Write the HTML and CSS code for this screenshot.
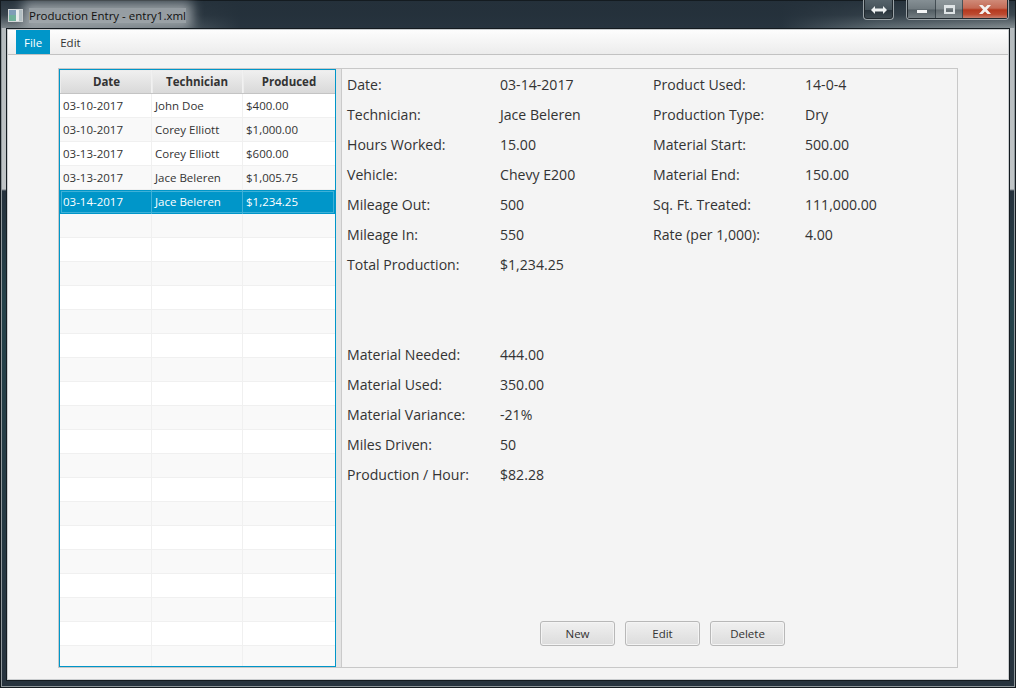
FILE: index.html
```html
<!DOCTYPE html>
<html lang="en">
<head>
<meta charset="utf-8">
<title>Production Entry - entry1.xml</title>
<link rel="stylesheet" href="styles.css">
</head>
<body>
<div class="window">
  <header class="titlebar">
    <svg class="app-icon" width="15" height="13" viewBox="0 0 15 13">
      <rect width="15" height="13" fill="#d5d9da"/>
      <rect x="1" y="1" width="7" height="11" fill="#6fb09a"/>
      <rect x="1" y="1" width="7" height="5" fill="#7f9cb8"/>
      <rect x="8" y="1" width="3" height="11" fill="#f2f4f4"/>
      <rect x="11" y="1" width="3" height="11" fill="#b3c2c7"/>
    </svg>
    <span class="title">Production Entry - entry1.xml</span>
    <div class="caption-group resize">
      <svg width="16" height="8" viewBox="0 0 16 8"><path d="M0 4 4 0v2.500h8V0l4 4-4 4V5.500H4V8Z" fill="#eef1f2"/></svg>
    </div>
    <div class="caption-group controls">
      <div class="cap min"><svg width="10" height="3" viewBox="0 0 10 3"><rect width="10" height="3" fill="#f4f6f7"/></svg></div>
      <div class="cap max"><svg width="11" height="9" viewBox="0 0 11 9"><path d="M0 0h11v9H0ZM2 3v4h7V3Z" fill="#dfe4e6" fill-rule="evenodd"/></svg></div>
      <div class="cap close"><svg width="12" height="9" viewBox="0 0 12 9"><path d="M0 0h3.500L6 2.500 8.500 0H12L8 4.500 12 9H8.500L6 6.500 3.500 9H0l4-4.500Z" fill="#f4f1ef"/></svg></div>
    </div>
  </header>
  <div class="content">
    <nav class="menubar">
      <span class="menu active">File</span>
      <span class="menu">Edit</span>
    </nav>
    <main class="main">
      <div class="split">
        <section class="table">
          <div class="row head"><div class="cell">Date</div><div class="cell">Technician</div><div class="cell">Produced</div></div>
          <div class="row"><div class="cell">03-10-2017</div><div class="cell">John Doe</div><div class="cell">$400.00</div></div>
          <div class="row"><div class="cell">03-10-2017</div><div class="cell">Corey Elliott</div><div class="cell">$1,000.00</div></div>
          <div class="row"><div class="cell">03-13-2017</div><div class="cell">Corey Elliott</div><div class="cell">$600.00</div></div>
          <div class="row"><div class="cell">03-13-2017</div><div class="cell">Jace Beleren</div><div class="cell">$1,005.75</div></div>
          <div class="row selected"><div class="cell">03-14-2017</div><div class="cell">Jace Beleren</div><div class="cell">$1,234.25</div></div>
          <div class="row"><div class="cell"></div><div class="cell"></div><div class="cell"></div></div>
          <div class="row"><div class="cell"></div><div class="cell"></div><div class="cell"></div></div>
          <div class="row"><div class="cell"></div><div class="cell"></div><div class="cell"></div></div>
          <div class="row"><div class="cell"></div><div class="cell"></div><div class="cell"></div></div>
          <div class="row"><div class="cell"></div><div class="cell"></div><div class="cell"></div></div>
          <div class="row"><div class="cell"></div><div class="cell"></div><div class="cell"></div></div>
          <div class="row"><div class="cell"></div><div class="cell"></div><div class="cell"></div></div>
          <div class="row"><div class="cell"></div><div class="cell"></div><div class="cell"></div></div>
          <div class="row"><div class="cell"></div><div class="cell"></div><div class="cell"></div></div>
          <div class="row"><div class="cell"></div><div class="cell"></div><div class="cell"></div></div>
          <div class="row"><div class="cell"></div><div class="cell"></div><div class="cell"></div></div>
          <div class="row"><div class="cell"></div><div class="cell"></div><div class="cell"></div></div>
          <div class="row"><div class="cell"></div><div class="cell"></div><div class="cell"></div></div>
          <div class="row"><div class="cell"></div><div class="cell"></div><div class="cell"></div></div>
          <div class="row"><div class="cell"></div><div class="cell"></div><div class="cell"></div></div>
          <div class="row"><div class="cell"></div><div class="cell"></div><div class="cell"></div></div>
          <div class="row"><div class="cell"></div><div class="cell"></div><div class="cell"></div></div>
          <div class="row"><div class="cell"></div><div class="cell"></div><div class="cell"></div></div>
          <div class="row"><div class="cell"></div><div class="cell"></div><div class="cell"></div></div>
        </section>
        <div class="divider"></div>
        <section class="panel">
          <div class="forms">
            <div class="form">
              <span>Date:</span><span>03-14-2017</span>
              <span>Technician:</span><span>Jace Beleren</span>
              <span>Hours Worked:</span><span>15.00</span>
              <span>Vehicle:</span><span>Chevy E200</span>
              <span>Mileage Out:</span><span>500</span>
              <span>Mileage In:</span><span>550</span>
              <span>Total Production:</span><span>$1,234.25</span>
              <div class="spacer"></div>
              <span>Material Needed:</span><span>444.00</span>
              <span>Material Used:</span><span>350.00</span>
              <span>Material Variance:</span><span>-21%</span>
              <span>Miles Driven:</span><span>50</span>
              <span>Production / Hour:</span><span>$82.28</span>
            </div>
            <div class="form">
              <span>Product Used:</span><span>14-0-4</span>
              <span>Production Type:</span><span>Dry</span>
              <span>Material Start:</span><span>500.00</span>
              <span>Material End:</span><span>150.00</span>
              <span>Sq. Ft. Treated:</span><span>111,000.00</span>
              <span>Rate (per 1,000):</span><span>4.00</span>
            </div>
          </div>
          <div class="actions">
            <button class="btn">New</button>
            <button class="btn">Edit</button>
            <button class="btn">Delete</button>
          </div>
        </section>
      </div>
    </main>
  </div>
</div>
</body>
</html>
```
FILE: styles.css
```css
* { box-sizing: border-box; }
html, body { margin: 0; padding: 0; }
body { width: 1016px; height: 688px; overflow: hidden; font-family: "Open Sans", "Noto Sans", sans-serif; color: #333; }

.window {
  width: 1016px;
  height: 688px;
  display: flex;
  flex-direction: column;
  border: 1px solid #141b20;
  box-shadow: inset 0 0 0 1px #8e969a;
  background: linear-gradient(180deg, #b3b9bc 0, #c0c5c7 188px, #26323d 190px, #24424a 300px, #27333e 100%);
}

.titlebar {
  height: 27px;
  flex: none;
  display: flex;
  align-items: flex-start;
  padding-left: 7px;
  padding-right: 6px;
  background:
    linear-gradient(180deg, rgba(36,48,58,.95) 0, rgba(36,48,58,.75) 14px, rgba(36,48,58,0) 27px),
    linear-gradient(90deg, #7e878c 0, #4e5a62 170px, #27343f 240px, #27343f 780px, #5f6c73 880px, #858e92 100%);
}
.app-icon { flex: none; margin-top: 8px; }
.title {
  margin: 7px auto 0 6px;
  font-size: 11.500px;
  line-height: 15px;
  color: #111;
  background: rgba(176,182,186,.8);
  box-shadow: 0 0 12px 6px rgba(176,182,186,.8);
}
.caption-group {
  display: flex;
  height: 20px;
  margin-top: -1px;
  border: 1px solid #9ba3a7;
  border-top: 0;
  border-radius: 0 0 4px 4px;
  box-shadow: inset 0 -1px 0 #20282e, inset 1px 0 0 #20282e, inset -1px 0 0 #20282e;
  overflow: hidden;
}
.resize {
  width: 31px;
  margin-right: 12px;
  align-items: center;
  justify-content: center;
  background: linear-gradient(180deg, #55626a 0, #46535b 50%, #2a353d 55%, #414d54 100%);
}
.controls { width: 103px; padding: 0 1px 1px; background: #20282e; }
.cap { display: flex; align-items: center; justify-content: center; border-right: 1px solid rgba(30,40,46,.6); }
.min { width: 28px; background: linear-gradient(180deg, #858f94 0, #717b80 50%, #525d63 55%, #737d82 100%); }
.min svg { margin-top: 5px; }
.max { width: 27px; background: linear-gradient(180deg, #8f989c 0, #7f888c 50%, #60696e 55%, #7f888c 100%); }
.close { flex: 1; border-right: 0; background: linear-gradient(180deg, #cf8a78 0, #c46a55 45%, #b5391f 55%, #bd4a30 80%, #c67f6e 100%); }

.content {
  flex: 1;
  display: flex;
  flex-direction: column;
  margin: 0 5px 6px 5px;
  border: 1px solid #141b20;
  background: #f4f4f4;
  box-shadow: inset 0 0 0 1px #c9ccce;
}

.menubar {
  flex: none;
  height: 25px;
  margin: 1px 1px 0;
  padding-left: 8px;
  display: flex;
  border-bottom: 1px solid #c2c2c2;
  background: linear-gradient(180deg, #fdfdfd 0, #ececec 100%);
}
.menu { padding: 0 10px; font-size: 11.500px; line-height: 26px; height: 24px; color: #333; }
.menu.active { padding: 0 8px; background: #0096c9; color: #fff; }

.main { flex: 1; padding: 13px 51px 12px 51px; }

.split {
  display: flex;
  height: 600px;
  border: 1px solid #c8c8c8;
}

.table {
  flex: none;
  width: 277px;
  height: 598px;
  border: 1px solid #0096c9;
  background: #fff;
  overflow: hidden;
}
.row {
  display: grid;
  grid-template-columns: 92px 91px 92px;
  height: 24px;
  background: #fff;
  border-bottom: 1px solid #f0f0f0;
  font-size: 11.500px;
  line-height: 23px;
  color: #333;
}
.row:nth-child(odd) { background: #f9f9f9; }
.cell { padding-left: 3px; border-right: 1px solid #f0f0f0; white-space: nowrap; }
.row .cell:last-child { border-right: 0; }

.row.head {
  height: 24px;
  background: linear-gradient(180deg, #f0f0f0 0, #d9d9d9 100%);
  border-bottom: 1px solid #c4c4c4;
  font-weight: 700;
  color: #333;
}
.head .cell { padding: 0; text-align: center; border-right: 1px solid #f1f1f1; box-shadow: inset 1px 1px 0 #ececec; }
.head .cell:first-child { padding-left: 2px; }

.row.selected {
  background: #0096c9;
  color: #fff;
  border-bottom: 0;
  box-shadow: inset 0 0 0 1px #0096c9, inset 0 0 0 2px #3fb1d8;
}
.selected .cell { border-right-color: #3fb1d8; }

.divider { flex: none; width: 6px; background: #e4e4e4; border-right: 1px solid #cacaca; }

.panel {
  flex: 1;
  display: flex;
  flex-direction: column;
  justify-content: space-between;
  padding: 1px 0 21px 5px;
  background: #f4f4f4;
}
.forms { display: flex; }
.form {
  display: grid;
  grid-template-columns: 153px 153px;
  grid-auto-rows: 30px;
  align-content: start;
  font-size: 14.100px;
  line-height: 30px;
  color: #333;
}
.form span { white-space: nowrap; }
.form + .form { grid-template-columns: 152px 150px; }
.spacer { grid-column: 1 / -1; grid-row: span 2; }

.actions { display: flex; gap: 10px; padding-left: 193px; }
.btn {
  width: 75px;
  height: 25px;
  padding: 0;
  border: 1px solid #b8b8b8;
  border-radius: 3px;
  background: linear-gradient(180deg, #f0f0f0 0, #dcdcdc 100%);
  box-shadow: inset 0 0 0 1px #f4f4f4;
  font: 11.500px "Open Sans", "Noto Sans", sans-serif;
  color: #333;
}
```
